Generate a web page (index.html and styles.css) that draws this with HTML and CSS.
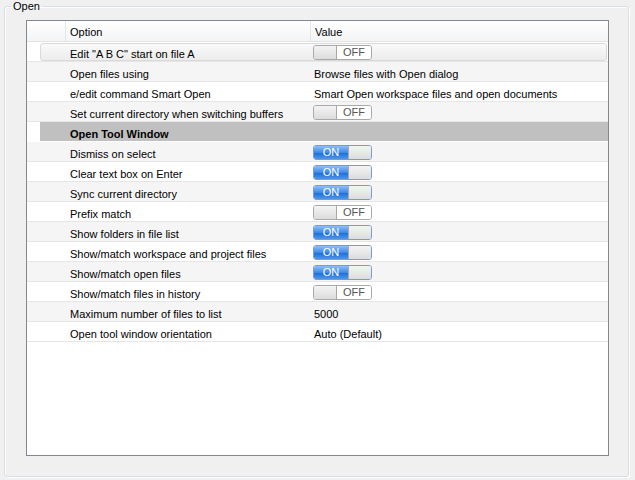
FILE: index.html
```html
<!DOCTYPE html>
<html>
<head>
<meta charset="utf-8">
<link rel="stylesheet" href="styles.css">
</head>
<body>
<fieldset class="group">
  <legend class="group-label">Open</legend>
  <div class="grid">
    <div class="head">
      <div class="c0"></div>
      <div class="c1">Option</div>
      <div class="c2">Value</div>
    </div>
    <div class="row sel">
      <div class="ind"></div>
      <div class="cells"><div class="ca"></div><div class="c1">Edit "A B C" start on file A</div><div class="c2 tgc"><span class="tg off"><span class="knob"></span><span class="lbl">OFF</span></span></div></div>
    </div>
    <div class="row alt">
      <div class="ind"></div>
      <div class="cells"><div class="ca"></div><div class="c1">Open files using</div><div class="c2">Browse files with Open dialog</div></div>
    </div>
    <div class="row">
      <div class="ind"></div>
      <div class="cells"><div class="ca"></div><div class="c1">e/edit command Smart Open</div><div class="c2">Smart Open workspace files and open documents</div></div>
    </div>
    <div class="row alt">
      <div class="ind"></div>
      <div class="cells"><div class="ca"></div><div class="c1">Set current directory when switching buffers</div><div class="c2 tgc"><span class="tg off"><span class="knob"></span><span class="lbl">OFF</span></span></div></div>
    </div>
    <div class="row grp">
      <div class="ind"></div>
      <div class="cells"><div class="ca"></div><div class="c1">Open Tool Window</div><div class="c2"></div></div>
    </div>
    <div class="row alt">
      <div class="ind"></div>
      <div class="cells"><div class="ca"></div><div class="c1">Dismiss on select</div><div class="c2 tgc"><span class="tg on"><span class="lbl">ON</span><span class="knob"></span></span></div></div>
    </div>
    <div class="row">
      <div class="ind"></div>
      <div class="cells"><div class="ca"></div><div class="c1">Clear text box on Enter</div><div class="c2 tgc"><span class="tg on"><span class="lbl">ON</span><span class="knob"></span></span></div></div>
    </div>
    <div class="row alt">
      <div class="ind"></div>
      <div class="cells"><div class="ca"></div><div class="c1">Sync current directory</div><div class="c2 tgc"><span class="tg on"><span class="lbl">ON</span><span class="knob"></span></span></div></div>
    </div>
    <div class="row">
      <div class="ind"></div>
      <div class="cells"><div class="ca"></div><div class="c1">Prefix match</div><div class="c2 tgc"><span class="tg off"><span class="knob"></span><span class="lbl">OFF</span></span></div></div>
    </div>
    <div class="row alt">
      <div class="ind"></div>
      <div class="cells"><div class="ca"></div><div class="c1">Show folders in file list</div><div class="c2 tgc"><span class="tg on"><span class="lbl">ON</span><span class="knob"></span></span></div></div>
    </div>
    <div class="row">
      <div class="ind"></div>
      <div class="cells"><div class="ca"></div><div class="c1">Show/match workspace and project files</div><div class="c2 tgc"><span class="tg on"><span class="lbl">ON</span><span class="knob"></span></span></div></div>
    </div>
    <div class="row alt">
      <div class="ind"></div>
      <div class="cells"><div class="ca"></div><div class="c1">Show/match open files</div><div class="c2 tgc"><span class="tg on"><span class="lbl">ON</span><span class="knob"></span></span></div></div>
    </div>
    <div class="row">
      <div class="ind"></div>
      <div class="cells"><div class="ca"></div><div class="c1">Show/match files in history</div><div class="c2 tgc"><span class="tg off"><span class="knob"></span><span class="lbl">OFF</span></span></div></div>
    </div>
    <div class="row alt">
      <div class="ind"></div>
      <div class="cells"><div class="ca"></div><div class="c1">Maximum number of files to list</div><div class="c2">5000</div></div>
    </div>
    <div class="row">
      <div class="ind"></div>
      <div class="cells"><div class="ca"></div><div class="c1">Open tool window orientation</div><div class="c2">Auto (Default)</div></div>
    </div>
  </div>
</fieldset>
</body>
</html>
```
FILE: styles.css
```css
html, body {
  margin: 0;
  padding: 0;
  background: #f0f0f0;
}
body {
  width: 635px;
  height: 480px;
  overflow: hidden;
  font-family: "Liberation Sans", Arial, sans-serif;
  font-size: 11px;
  color: #000;
}
* {
  box-sizing: border-box;
}
.group {
  margin: 0 6px 0 4px;
  padding: 8px 19px 20px 21px;
  border: 1px solid #d5dfe5;
  border-radius: 3px;
  box-shadow: 1px 1px 0 #fff, inset 1px 1px 0 #fff;
}
.group-label {
  padding: 0 2px;
  margin-left: -15px;
  line-height: 12px;
  color: #000;
}
.grid {
  height: 436px;
  border: 1px solid #828790;
  background: #fff;
}
.head {
  display: flex;
  height: 21px;
  border-bottom: 1px solid #e3e3e3;
  background: linear-gradient(#ffffff, #f3f4f5);
  line-height: 16px;
}
.head .c0 {
  width: 39px;
  border-right: 1px solid #e3e5e8;
}
.head .c1 {
  width: 245px;
  padding: 3px 0 0 4px;
  border-right: 1px solid #e3e5e8;
}
.head .c2 {
  flex: 1;
  padding: 3px 0 0 4px;
}
.row {
  display: flex;
  height: 20px;
  border-bottom: 1px solid #e6e6e6;
  line-height: 16px;
}
.row.alt {
  background: #f5f5f5;
}
.ind {
  width: 13px;
}
.cells {
  flex: 1;
  display: flex;
}
.ca {
  width: 26px;
}
.c1 {
  width: 245px;
  padding: 4px 0 0 4px;
  white-space: nowrap;
}
.c2 {
  flex: 1;
  padding: 4px 0 0 3px;
  white-space: nowrap;
}
.c2.tgc {
  padding: 3px 0 0 2px;
}
.row.sel .cells {
  margin: 1px 1px 0 0;
  border: 1px solid #dadada;
  border-radius: 3px;
  background: linear-gradient(#fafafa, #ececec);
}
.row.sel .ca {
  width: 25px;
}
.row.sel .c1 {
  padding-top: 2px;
}
.row.sel .c2.tgc {
  padding: 1px 0 0 2px;
}
.row.grp {
  border-bottom-color: #fff;
}
.row.grp .cells {
  background: #c0c0c0;
  font-weight: bold;
}
.tg {
  display: flex;
  width: 59px;
  height: 15px;
  border: 1px solid #a9a9a9;
  border-radius: 3px;
  overflow: hidden;
  line-height: 13px;
  font-size: 11px;
}
.tg .knob {
  width: 23px;
  background: linear-gradient(#f4f4f4, #dcdcdc);
}
.tg.off .knob {
  border-right: 1px solid #a9a9a9;
}
.tg.on .knob {
  border-left: 1px solid #a9a9a9;
}
.tg.off .lbl {
  flex: 1;
  background: #fff;
  color: #555;
  text-align: center;
}
.tg.on .lbl {
  flex: 1;
  background: linear-gradient(#8fbff7, #3f8ae6 50%, #1f6fd8 55%, #4d96ec);
  color: #fff;
  text-align: center;
}
.tg.on {
  border-color: #7a9cc8;
}
```
